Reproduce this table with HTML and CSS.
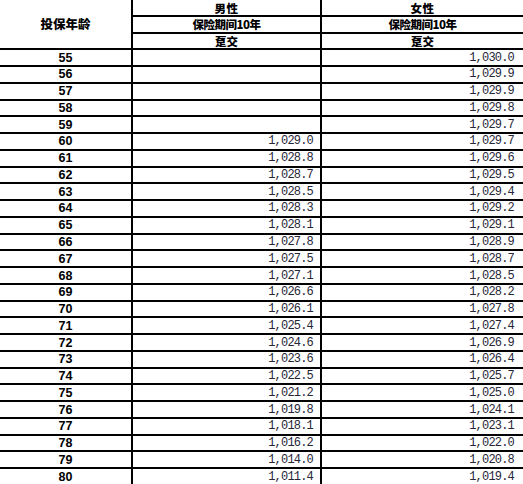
FILE: index.html
```html
<!DOCTYPE html>
<html lang="zh-CN">
<head>
<meta charset="utf-8">
<title>投保年龄</title>
<link rel="stylesheet" href="styles.css">
</head>
<body>
<div class="sheet">
  <div class="cell head age">投保年龄</div>
  <div class="cell head top">男性</div>
  <div class="cell head top">女性</div>
  <div class="cell head tight">保险期间10年</div>
  <div class="cell head tight">保险期间10年</div>
  <div class="cell head">趸交</div>
  <div class="cell head">趸交</div>

  <div class="cell n">55</div><div class="cell v"></div><div class="cell v">1,030.0</div>
  <div class="cell n">56</div><div class="cell v"></div><div class="cell v">1,029.9</div>
  <div class="cell n">57</div><div class="cell v"></div><div class="cell v">1,029.9</div>
  <div class="cell n">58</div><div class="cell v"></div><div class="cell v">1,029.8</div>
  <div class="cell n">59</div><div class="cell v"></div><div class="cell v">1,029.7</div>
  <div class="cell n">60</div><div class="cell v">1,029.0</div><div class="cell v">1,029.7</div>
  <div class="cell n">61</div><div class="cell v">1,028.8</div><div class="cell v">1,029.6</div>
  <div class="cell n">62</div><div class="cell v">1,028.7</div><div class="cell v">1,029.5</div>
  <div class="cell n">63</div><div class="cell v">1,028.5</div><div class="cell v">1,029.4</div>
  <div class="cell n">64</div><div class="cell v">1,028.3</div><div class="cell v">1,029.2</div>
  <div class="cell n">65</div><div class="cell v">1,028.1</div><div class="cell v">1,029.1</div>
  <div class="cell n">66</div><div class="cell v">1,027.8</div><div class="cell v">1,028.9</div>
  <div class="cell n">67</div><div class="cell v">1,027.5</div><div class="cell v">1,028.7</div>
  <div class="cell n">68</div><div class="cell v">1,027.1</div><div class="cell v">1,028.5</div>
  <div class="cell n">69</div><div class="cell v">1,026.6</div><div class="cell v">1,028.2</div>
  <div class="cell n">70</div><div class="cell v">1,026.1</div><div class="cell v">1,027.8</div>
  <div class="cell n">71</div><div class="cell v">1,025.4</div><div class="cell v">1,027.4</div>
  <div class="cell n">72</div><div class="cell v">1,024.6</div><div class="cell v">1,026.9</div>
  <div class="cell n">73</div><div class="cell v">1,023.6</div><div class="cell v">1,026.4</div>
  <div class="cell n">74</div><div class="cell v">1,022.5</div><div class="cell v">1,025.7</div>
  <div class="cell n">75</div><div class="cell v">1,021.2</div><div class="cell v">1,025.0</div>
  <div class="cell n">76</div><div class="cell v">1,019.8</div><div class="cell v">1,024.1</div>
  <div class="cell n">77</div><div class="cell v">1,018.1</div><div class="cell v">1,023.1</div>
  <div class="cell n">78</div><div class="cell v">1,016.2</div><div class="cell v">1,022.0</div>
  <div class="cell n">79</div><div class="cell v">1,014.0</div><div class="cell v">1,020.8</div>
  <div class="cell n">80</div><div class="cell v">1,011.4</div><div class="cell v">1,019.4</div>
</div>
</body>
</html>
```
FILE: styles.css
```css
html, body {
  margin: 0;
  padding: 0;
  background: #ffffff;
}
.sheet {
  display: grid;
  grid-template-columns: 131px 187px 201px;
  grid-template-rows: repeat(29, 1fr);
  column-gap: 2px;
  row-gap: 2px;
  width: 523px;
  height: 484px;
  background: #000000;
  overflow: hidden;
}
.cell {
  background: #ffffff;
  display: flex;
  align-items: center;
  justify-content: center;
  white-space: nowrap;
  min-height: 0;
}
.head {
  font-family: "Noto Sans CJK SC", "Liberation Sans", sans-serif;
  font-weight: 900;
  font-size: 11.5px;
  line-height: 12px;
  color: #000000;
}
.age {
  grid-row: span 3;
  font-size: 12.5px;
}
.top {
  padding-top: 2px;
  letter-spacing: 0.6px;
}
.tight {
  letter-spacing: -0.5px;
}
.n {
  font-family: "Liberation Sans", Arial, sans-serif;
  font-weight: 700;
  font-size: 12.5px;
  line-height: 12px;
  color: #000000;
}
.v {
  justify-content: flex-end;
  padding-right: 7px;
  font-family: "Liberation Mono", "Courier New", monospace;
  font-size: 12px;
  letter-spacing: -0.8px;
  line-height: 12px;
  color: #262638;
}
.sheet > .v:nth-child(3n+1) {
  padding-right: 9px;
}
```
